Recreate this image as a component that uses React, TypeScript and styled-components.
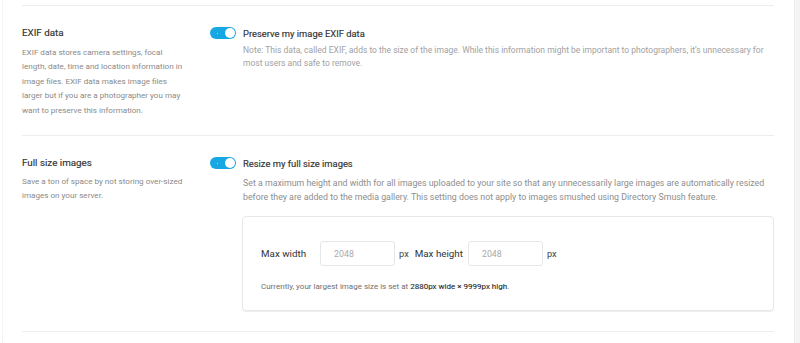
import React from 'react';
import styled, { createGlobalStyle } from 'styled-components';

const GlobalStyle = createGlobalStyle`
    html, body {
        margin: 0;
        padding: 0;
        background: #ffffff;
    }
    body {
        font-family: Roboto, 'Liberation Sans', Arial, sans-serif;
        -webkit-font-smoothing: antialiased;
    }
`;

const Page = styled.div`
    display: flex;
    width: 800px;
    height: 343px;
    overflow: hidden;
    background: #ffffff;
`;

const Main = styled.div`
    flex: 1;
    padding: 5px 20px 0 19px;
    border-left: 1px dotted #ececec;
    margin-left: 2px;
`;

const Gutter = styled.div`
    width: 5px;
    background: #f4f4f4;
    border-left: 1px solid #ededed;
`;

const Section = styled.div<{ $last?: boolean }>`
    display: grid;
    grid-template-columns: 188px 1fr;
    border-top: 1px solid #eeeeee;
    border-bottom: ${p => (p.$last ? '1px solid #eeeeee' : 'none')};
    padding: 20px 0 ${p => (p.$last ? '20px' : '18px')};
`;

const Info = styled.div`
    padding-right: 24px;
`;

const Title = styled.div`
    font-size: 9.8px;
    line-height: 14px;
    color: #333333;
    -webkit-text-stroke: 0.15px #333333;
`;

const Desc = styled.p<{ $gap?: number }>`
    margin: ${p => p.$gap ?? 5}px 0 0;
    font-size: 8.1px;
    line-height: 14.4px;
    color: #8a8a8a;
`;

const Content = styled.div`
    display: flex;
    flex-direction: column;
`;

const ToggleRow = styled.label`
    display: flex;
    align-items: center;
    gap: 7px;
    height: 14px;
`;

const Toggle = styled.span`
    position: relative;
    width: 26px;
    height: 12px;
    border-radius: 6px;
    background: #17a8e3;
    flex-shrink: 0;

    &::after {
        content: '';
        position: absolute;
        top: 1px;
        right: 1px;
        width: 10px;
        height: 10px;
        border-radius: 50%;
        background: #ffffff;
    }

    &::before {
        content: '';
        position: absolute;
        top: 6px;
        left: 7px;
        width: 1px;
        height: 1px;
        border-radius: 50%;
        background: rgba(255, 255, 255, 0.8);
    }
`;

const Label = styled.span`
    font-size: 9.4px;
    color: #333333;
    -webkit-text-stroke: 0.15px #333333;
`;

const Note = styled.p<{ $lh: number; $gap: number; $size: number; $tone: string }>`
    margin: ${p => p.$gap}px 0 0 33px;
    font-size: ${p => p.$size}px;
    line-height: ${p => p.$lh}px;
    color: ${p => p.$tone};
`;

const Box = styled.div`
    margin: 12px 0 0 32px;
    border: 1px solid #e8e8e8;
    border-radius: 4px;
    box-shadow: 0 1px 0 #eeeeee;
    padding: 24px 18px 17px;
`;

const FieldRow = styled.div`
    display: flex;
    align-items: center;
    height: 25px;
`;

const FieldLabel = styled.span<{ $ml?: number }>`
    margin-left: ${p => p.$ml ?? 0}px;
    font-size: 9.8px;
    color: #333333;
`;

const Input = styled.input<{ $ml: number }>`
    box-sizing: border-box;
    margin-left: ${p => p.$ml}px;
    width: 75px;
    height: 25px;
    border: 1px solid #e6e6e6;
    border-radius: 3px;
    padding: 0 0 0 13px;
    font-family: Roboto, 'Liberation Sans', Arial, sans-serif;
    font-size: 8.8px;
    color: #333;
    outline: none;

    &::placeholder {
        color: #aaaaaa;
    }
`;

const Unit = styled.span`
    margin-left: 4px;
    font-size: 9.2px;
    color: #444444;
`;

const Footnote = styled.p`
    margin: 15px 0 0;
    font-size: 8px;
    line-height: 12px;
    color: #6f6f6f;

    strong {
        font-weight: 400;
        color: #2a2a2a;
        -webkit-text-stroke: 0.1px #2a2a2a;
    }
`;

export default function App() {
    return (
        <Page>
            <GlobalStyle />
            <Main>
                <Section>
                    <Info>
                        <Title>EXIF data</Title>
                        <Desc>
                            EXIF data stores camera settings, focal length, date, time and location
                            information in image files. EXIF data makes image files larger but if you
                            are a photographer you may want to preserve this information.
                        </Desc>
                    </Info>
                    <Content>
                        <ToggleRow>
                            <Toggle />
                            <Label>Preserve my image EXIF data</Label>
                        </ToggleRow>
                        <Note $lh={13} $gap={4} $size={8.5} $tone="#a2a2a2">
                            Note: This data, called EXIF, adds to the size of the image. While this
                            information might be important to photographers, it’s unnecessary for most
                            users and safe to remove.
                        </Note>
                    </Content>
                </Section>

                <Section $last>
                    <Info>
                        <Title>Full size images</Title>
                        <Desc $gap={4}>
                            Save a ton of space by not storing over-sized images on your server.
                        </Desc>
                    </Info>
                    <Content>
                        <ToggleRow>
                            <Toggle />
                            <Label>Resize my full size images</Label>
                        </ToggleRow>
                        <Note $lh={14} $gap={6} $size={8.8} $tone="#8e8e8e">
                            Set a maximum height and width for all images uploaded to your site so that
                            any unnecessarily large images are automatically resized before they are
                            added to the media gallery. This setting does not apply to images smushed
                            using Directory Smush feature.
                        </Note>
                        <Box>
                            <FieldRow>
                                <FieldLabel>Max width</FieldLabel>
                                <Input $ml={14} placeholder="2048" />
                                <Unit>px</Unit>
                                <FieldLabel $ml={6}>Max height</FieldLabel>
                                <Input $ml={5} placeholder="2048" />
                                <Unit>px</Unit>
                            </FieldRow>
                            <Footnote>
                                Currently, your largest image size is set at{' '}
                                <strong>2880px wide × 9999px high</strong>.
                            </Footnote>
                        </Box>
                    </Content>
                </Section>
            </Main>
            <Gutter />
        </Page>
    );
}
